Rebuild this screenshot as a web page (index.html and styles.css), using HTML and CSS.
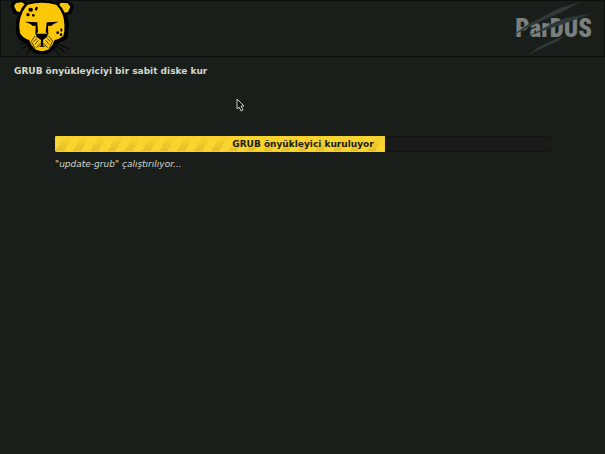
FILE: index.html
```
<!DOCTYPE html>
<html lang="tr">
<head>
  <meta charset="UTF-8" />
  <meta name="viewport" content="width=device-width, initial-scale=1" />
  <title>Pardus</title>
  <link rel="stylesheet" href="styles.css">
</head>
<body>
  <header class="banner">
    <svg class="leopard" viewBox="0 0 270 168" aria-hidden="true">
      <!-- whiskers -->
      <g fill="none" stroke="#000" stroke-width="3">
        <path d="M94 130 L66 146 M97 137 L78 166 M92 123 L62 132 M158 130 L196 158 M155 137 L178 166 M160 125 L210 149" />
      </g>
      <!-- head outline -->
      <path fill="#000" d="M42 3 L70 1 Q77 3 81 8 Q125 -5 169 8 Q174 2 184 1 L208 4 Q220 10 220 23 L213 42 L201 45 Q208 66 206 84 L203 113 Q192 124 174 128 Q166 145 150 158 Q126 168 100 158 Q84 144 77 128 Q54 121 49 104 Q44 72 54 45 L40 40 L32 20 Q32 8 42 3 Z" />
      <path fill="#fbc707" d="M48 9 L66 7 L74 13 Q64 23 60 36 L50 34 L42 18 Z M182 8 L203 10 L211 20 L204 36 L194 38 Q189 24 178 15 Z M83 14 Q126 3 169 14 Q186 32 191 55 Q195 77 193 94 L190 108 Q179 117 164 120 Q158 138 147 148 Q126 159 105 148 Q94 138 87 120 Q70 114 61 101 Q55 77 61 54 Q67 31 83 14 Z" />
      <!-- spots -->
      <g fill="#000">
        <ellipse cx="92" cy="29" rx="7" ry="6" />
        <ellipse cx="109" cy="26" rx="4" ry="6" transform="rotate(20 109 26)" />
        <circle cx="84" cy="44" r="5" />
        <circle cx="100" cy="46" r="4" />
        <ellipse cx="184" cy="90" rx="3" ry="5" />
        <circle cx="173" cy="98" r="4" />
        <circle cx="183" cy="104" r="4" />
      </g>
      <!-- eyes, nose and mouth -->
      <path fill="#000" d="M75 65 L112 67 L114 96 L106 104 L107 77 L98 78 L91 72 Z M176 65 L140 67 L137 96 L145 104 L144 77 L153 78 L161 72 Z M108 101 L143 101 L142 110 L129 120 L130 137 L137 141 L126 140 L114 141 L122 137 L123 120 L109 110 Z" />
      <g fill="none" stroke="#000" stroke-width="2">
        <path d="M105 108 L94 124 L105 146 M110 115 L101 125 M115 121 L105 133 M121 130 L109 143 M146 108 L158 124 L147 146 M142 115 L151 125 M137 121 L147 133 M131 130 L143 143" />
      </g>
    </svg>
    <div class="brand">
      <span class="brand-name">ParDUS</span>
      <svg class="scratches" viewBox="0 0 270 168" aria-hidden="true">
        <path fill="#30383a" d="M0 104 L44 73 Q100 42 144 20 L206 3 L152 32 L101 54 Q42 83 0 104 Z" />
        <path fill="#30383a" d="M33 112 L84 88 Q124 63 165 50 L245 36 L192 55 L143 73 L99 87 Z" />
        <path fill="#30383a" d="M47 163 L79 139 L124 117 L157 104 L140 120 L96 139 Z" />
      </svg>
    </div>
  </header>

  <main class="content">
    <h1>GRUB önyükleyiciyi bir sabit diske kur</h1>
    <div class="task">
      <div class="meter">
        <progress id="install" value="66.5" max="100"></progress>
        <label for="install">GRUB önyükleyici kuruluyor</label>
      </div>
      <p class="status">"update-grub" çalıştırılıyor...</p>
    </div>
  </main>

  <svg class="pointer" viewBox="0 0 9 14" aria-hidden="true">
    <path fill="#111" stroke="#c8c8c8" d="M1 1 L1 11 L3 9 L5 13 L7 12 L5 8 L8 8 Z" />
  </svg>
</body>
</html>
```

FILE: styles.css
```
body {
  margin: 0;
  min-height: 100vh;
  box-sizing: border-box;
  background-color: #191e1a;
  color: #d3d7cf;
  font-family: "DejaVu Sans", Verdana, sans-serif;
  font-size: 9px;
}

.banner {
  display: flex;
  justify-content: space-between;
  height: 57px;
  box-sizing: border-box;
  border: 1px solid #0c0f0d;
}

.leopard {
  width: 90px;
  height: 56px;
  margin: -1px;
}

.brand {
  position: relative;
  display: flex;
  align-items: center;
  padding-right: 12px;
}

.brand-name {
  color: #7b7f7d;
  font-family: "Roboto Condensed", Roboto, "Liberation Sans", sans-serif;
  font-size: 25px;
  font-weight: 900;
}

/* claw marks run across the name */
.scratches {
  position: absolute;
  right: 2px;
  top: 0;
  width: 90px;
  height: 56px;
}

.content {
  padding: 7px 14px;
}

h1 {
  margin: 0;
  font-size: 9px;
  line-height: 14px;
}

.task {
  margin: 58px 40px 0 41px;
}

.meter {
  display: grid;
  align-items: center;
}

.meter progress,
.meter label {
  grid-area: 1 / 1;
}

progress {
  appearance: none;
  width: 100%;
  height: 16px;
  border: none;
  border-radius: 2px;
  overflow: hidden;
}

progress::-webkit-progress-bar {
  background: #1a1a1a;
  box-shadow: inset 0 0 0 1px #111412;
}

progress::-webkit-progress-value {
  background:
    linear-gradient(#fbd52f, rgba(251, 213, 47, 0)),
    repeating-linear-gradient(120deg, #fbd52f 0 8px, #e4bc28 8px 15px);
  box-shadow: inset 0 0 0 1px #f5cf2c;
}

.meter label {
  z-index: 1;
  color: #1c1c10;
  font-weight: bold;
  line-height: 14px;
  text-align: center;
}

.status {
  margin: 5px 0 0;
  font-style: italic;
  line-height: 14px;
}

.pointer {
  position: absolute;
  left: 236px;
  top: 98px;
  width: 9px;
  height: 14px;
}
```
